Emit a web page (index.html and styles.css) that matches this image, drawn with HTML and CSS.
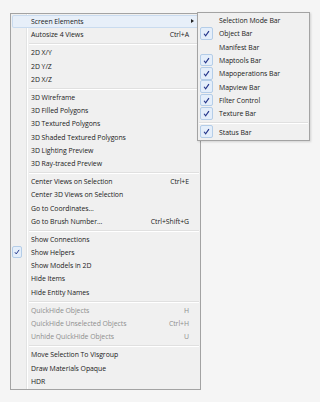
FILE: index.html
```html
<!DOCTYPE html>
<html lang="en">
<head>
    <meta charset="UTF-8">
    <title>View Menu</title>
    <link rel="stylesheet" href="styles.css">
</head>
<body>
    <div class="menu">
        <div class="item hot"><span class="label">Screen Elements</span><span class="arrow"></span></div>
        <div class="item"><span class="label">Autosize 4 Views</span><span class="key">Ctrl+A</span></div>
        <div class="sep"></div>
        <div class="item"><span class="label">2D X/Y</span></div>
        <div class="item"><span class="label">2D Y/Z</span></div>
        <div class="item"><span class="label">2D X/Z</span></div>
        <div class="sep"></div>
        <div class="item"><span class="label">3D Wireframe</span></div>
        <div class="item"><span class="label">3D Filled Polygons</span></div>
        <div class="item"><span class="label">3D Textured Polygons</span></div>
        <div class="item"><span class="label">3D Shaded Textured Polygons</span></div>
        <div class="item"><span class="label">3D Lighting Preview</span></div>
        <div class="item"><span class="label">3D Ray-traced Preview</span></div>
        <div class="sep"></div>
        <div class="item"><span class="label">Center Views on Selection</span><span class="key">Ctrl+E</span></div>
        <div class="item"><span class="label">Center 3D Views on Selection</span></div>
        <div class="item"><span class="label">Go to Coordinates...</span></div>
        <div class="item"><span class="label">Go to Brush Number...</span><span class="key">Ctrl+Shift+G</span></div>
        <div class="sep"></div>
        <div class="item"><span class="label">Show Connections</span></div>
        <div class="item checked"><span class="check"><svg viewBox="0 0 8 8"><path d="M1.2 4.3 L3 6.6 L6.8 1.2" fill="none" stroke="#24358a" stroke-width="1.3"/></svg></span><span class="label">Show Helpers</span></div>
        <div class="item"><span class="label">Show Models in 2D</span></div>
        <div class="item"><span class="label">Hide Items</span></div>
        <div class="item"><span class="label">Hide Entity Names</span></div>
        <div class="sep"></div>
        <div class="item disabled"><span class="label">QuickHide Objects</span><span class="key">H</span></div>
        <div class="item disabled"><span class="label">QuickHide Unselected Objects</span><span class="key">Ctrl+H</span></div>
        <div class="item disabled"><span class="label">Unhide QuickHide Objects</span><span class="key">U</span></div>
        <div class="sep"></div>
        <div class="item"><span class="label">Move Selection To Visgroup</span></div>
        <div class="item"><span class="label">Draw Materials Opaque</span></div>
        <div class="item"><span class="label">HDR</span></div>

        <div class="submenu">
            <div class="item"><span class="label">Selection Mode Bar</span></div>
            <div class="item checked"><span class="check"><svg viewBox="0 0 8 8"><path d="M1.2 4.3 L3 6.6 L6.8 1.2" fill="none" stroke="#24358a" stroke-width="1.3"/></svg></span><span class="label">Object Bar</span></div>
            <div class="item"><span class="label">Manifest Bar</span></div>
            <div class="item checked"><span class="check"><svg viewBox="0 0 8 8"><path d="M1.2 4.3 L3 6.6 L6.8 1.2" fill="none" stroke="#24358a" stroke-width="1.3"/></svg></span><span class="label">Maptools Bar</span></div>
            <div class="item checked"><span class="check"><svg viewBox="0 0 8 8"><path d="M1.2 4.3 L3 6.6 L6.8 1.2" fill="none" stroke="#24358a" stroke-width="1.3"/></svg></span><span class="label">Mapoperations Bar</span></div>
            <div class="item checked"><span class="check"><svg viewBox="0 0 8 8"><path d="M1.2 4.3 L3 6.6 L6.8 1.2" fill="none" stroke="#24358a" stroke-width="1.3"/></svg></span><span class="label">Mapview Bar</span></div>
            <div class="item checked"><span class="check"><svg viewBox="0 0 8 8"><path d="M1.2 4.3 L3 6.6 L6.8 1.2" fill="none" stroke="#24358a" stroke-width="1.3"/></svg></span><span class="label">Filter Control</span></div>
            <div class="item checked"><span class="check"><svg viewBox="0 0 8 8"><path d="M1.2 4.3 L3 6.6 L6.8 1.2" fill="none" stroke="#24358a" stroke-width="1.3"/></svg></span><span class="label">Texture Bar</span></div>
            <div class="sep"></div>
            <div class="item checked"><span class="check"><svg viewBox="0 0 8 8"><path d="M1.2 4.3 L3 6.6 L6.8 1.2" fill="none" stroke="#24358a" stroke-width="1.3"/></svg></span><span class="label">Status Bar</span></div>
        </div>
    </div>
</body>
</html>
```

FILE: styles.css
```css
body {
    margin: 0;
    padding: 13px 0 0 10px;
    background-color: #f5f5f5;
    font-family: "Open Sans", Arial, sans-serif;
    font-size: 6.9px;
    letter-spacing: -0.05px;
    color: #1a1a1a;
}
.menu {
    position: relative;
    width: 187px;
    padding: 1px;
    border: 1px solid #a3a3a3;
    background: linear-gradient(to right, #f0f0f0 15px, #e2e3e3 15px, #e2e3e3 16px, #ffffff 16px, #ffffff 17px, #f0f0f0 17px);
}
.item {
    position: relative;
    display: flex;
    align-items: center;
    height: 13.2px;
    padding-left: 19px;
    padding-right: 10px;
    box-sizing: border-box;
    white-space: nowrap;
}
.label {
    flex: 1;
}
.key {
    text-align: right;
}
.hot {
    background: #e7eff9;
    box-shadow: inset 0 0 0 1px #c9dbef;
    border-radius: 2px;
}
.arrow {
    position: absolute;
    right: 5px;
    top: 4px;
    width: 0;
    height: 0;
    border-left: 3px solid #222;
    border-top: 2.5px solid transparent;
    border-bottom: 2.5px solid transparent;
}
.disabled {
    color: #8e8e8e;
}
.sep {
    height: 5px;
    margin-left: 17px;
    background: linear-gradient(to bottom, transparent 2px, #e0e0e0 2px, #e0e0e0 3px, #ffffff 3px, #ffffff 4px, transparent 4px);
}
.check {
    position: absolute;
    left: 0;
    top: 0;
    width: 10px;
    height: 12px;
    box-sizing: border-box;
    border: 1px solid #b4cde8;
    border-radius: 2px;
    background: #e4eefa;
    display: flex;
    align-items: center;
    justify-content: center;
}
.check svg {
    width: 6px;
    height: 6px;
}
.submenu {
    position: absolute;
    left: 186px;
    top: -2px;
    width: 109px;
    padding: 1px;
    border: 1px solid #a3a3a3;
    background: #f0f0f0;
    box-shadow: 1px 1px 2px rgba(0,0,0,0.15);
}
.submenu .item {
    height: 13.3px;
    padding-left: 20px;
}
.submenu .sep {
    margin-left: 0;
}
.submenu .check {
    left: 1px;
    width: 13px;
    height: 12.5px;
}
.submenu .check svg {
    width: 7px;
    height: 7px;
}
```
